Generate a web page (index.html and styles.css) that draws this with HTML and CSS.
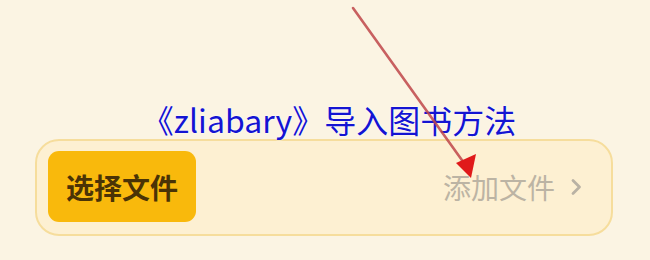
FILE: index.html
```html
<!DOCTYPE html>
<html lang="zh">
<head>
<meta charset="utf-8">
<link rel="stylesheet" href="styles.css">
</head>
<body>
<div class="page">
  <h1 class="title">《zliabary》导入图书方法</h1>
  <div class="card">
    <div class="pick">选择文件</div>
    <div class="add">
      <span class="add-text">添加文件</span>
      <svg class="chev" width="14" height="18" viewBox="0 0 14 18"><path d="M4 2.5 L10.5 9 L4 15.5" fill="none" stroke="#b9b2a4" stroke-width="2.8" stroke-linecap="round" stroke-linejoin="round"/></svg>
    </div>
  </div>
  <svg class="arrow" width="650" height="260" viewBox="0 0 650 260">
    <line x1="353" y1="8" x2="464" y2="163" stroke="#c0474a" stroke-width="2.6" stroke-linecap="round" opacity="0.85"/>
    <polygon points="456,163 476,154 471,178" fill="#e01a1a"/>
  </svg>
</div>
</body>
</html>
```

FILE: styles.css
```css
html, body {
  margin: 0;
  padding: 0;
}
body {
  background: #fbf4e3;
  font-family: "Noto Sans CJK SC", "Noto Sans", sans-serif;
}
.page {
  position: relative;
  width: 650px;
  height: 260px;
  padding-top: 101px;
  box-sizing: border-box;
}
.title {
  margin: 0;
  font-size: 32px;
  font-weight: 400;
  line-height: 37px;
  color: #1414d2;
  text-align: center;
  padding-left: 8px;
  text-shadow: 0 0 2px #fff, 0 0 1px #fff;
}
.card {
  margin: 1px 37px 0 35px;
  height: 97px;
  box-sizing: border-box;
  border: 2px solid #f6dd9c;
  border-radius: 24px;
  background: #fdf0d2;
  display: flex;
  align-items: center;
  justify-content: space-between;
  padding: 0 28px 2px 11px;
}
.pick {
  width: 148px;
  height: 71px;
  border-radius: 11px;
  background: #f9b90c;
  color: #4a3306;
  font-size: 28px;
  font-weight: 700;
  display: flex;
  align-items: center;
  justify-content: center;
}
.add {
  display: flex;
  align-items: center;
  gap: 14px;
}
.add-text {
  font-size: 28px;
  color: #bcb4a4;
}
.chev {
  display: block;
}
.arrow {
  position: absolute;
  left: 0;
  top: 0;
}
```
